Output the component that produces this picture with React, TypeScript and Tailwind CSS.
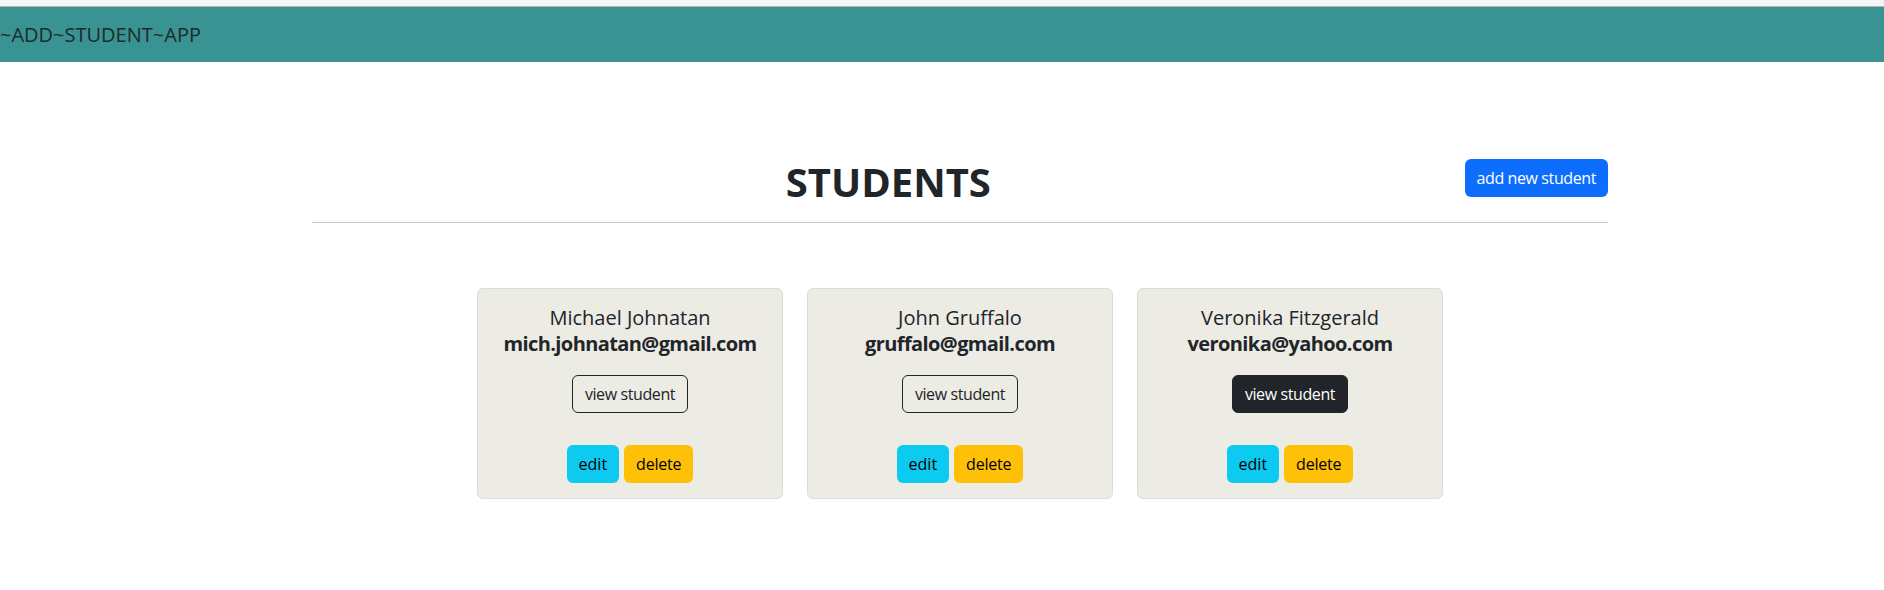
import React from 'react';

interface Student {
  name: string;
  email: string;
  active?: boolean;
}

const students: Student[] = [
  { name: 'Michael Johnatan', email: 'mich.johnatan@gmail.com' },
  { name: 'John Gruffalo', email: 'gruffalo@gmail.com' },
  { name: 'Veronika Fitzgerald', email: 'veronika@yahoo.com', active: true },
];

const StudentCard: React.FC<{ student: Student }> = ({ student }) => (
  <div className="w-[306px] border border-[#dcdcd8] rounded-[6px] bg-[#ecebe4] pt-[16px] pb-[15px] text-center">
    <div className="text-[20px] leading-[26px] font-medium">{student.name}</div>
    <div className="text-[20px] leading-[26px] font-bold tracking-[-0.6px]">{student.email}</div>
    <div className="mt-[18px] flex justify-center">
      <button
        className={
          student.active
            ? 'h-[38px] px-[12px] rounded-[6px] border border-[#212529] bg-[#212529] text-white text-[16px] tracking-[-0.4px]'
            : 'h-[38px] px-[12px] rounded-[6px] border border-[#212529] text-[#212529] text-[16px] tracking-[-0.4px]'
        }
      >
        view student
      </button>
    </div>
    <div className="mt-[32px] flex justify-center gap-[5px]">
      <button className="h-[38px] px-[12px] rounded-[6px] bg-[#0dcaf0] text-black text-[16px]">edit</button>
      <button className="h-[38px] px-[12px] rounded-[6px] bg-[#ffc107] text-black text-[16px] tracking-[-0.2px]">delete</button>
    </div>
  </div>
);

const App: React.FC = () => {
  return (
    <div className="min-h-[590px] bg-white text-[#212529] font-['Open_Sans',sans-serif]">
      <div className="h-[7px] bg-[#f5f5f5] border-b border-[#b4b4b4]" />
      <header className="h-[55px] bg-[#3a9393] flex items-center text-[20px] text-[#1f2a2a]">
        ~ADD~STUDENT~APP
      </header>

      <main className="ml-[312px] w-[1296px] pt-[96px]">
        <div className="flex items-start">
          <h1 className="flex-1 text-center text-[40px] leading-[48px] font-bold">STUDENTS</h1>
          <button className="mt-[1px] h-[38px] px-[12px] rounded-[6px] bg-[#0d6efd] text-white text-[16px] tracking-[-0.4px]">
            add new student
          </button>
        </div>
        <hr className="mt-[16px] border-t border-[#c8c9ca]" />

        <div className="mt-[65px] flex justify-center gap-[24px]">
          {students.map((s) => (
            <StudentCard key={s.email} student={s} />
          ))}
        </div>
      </main>
    </div>
  );
};

export default App;
